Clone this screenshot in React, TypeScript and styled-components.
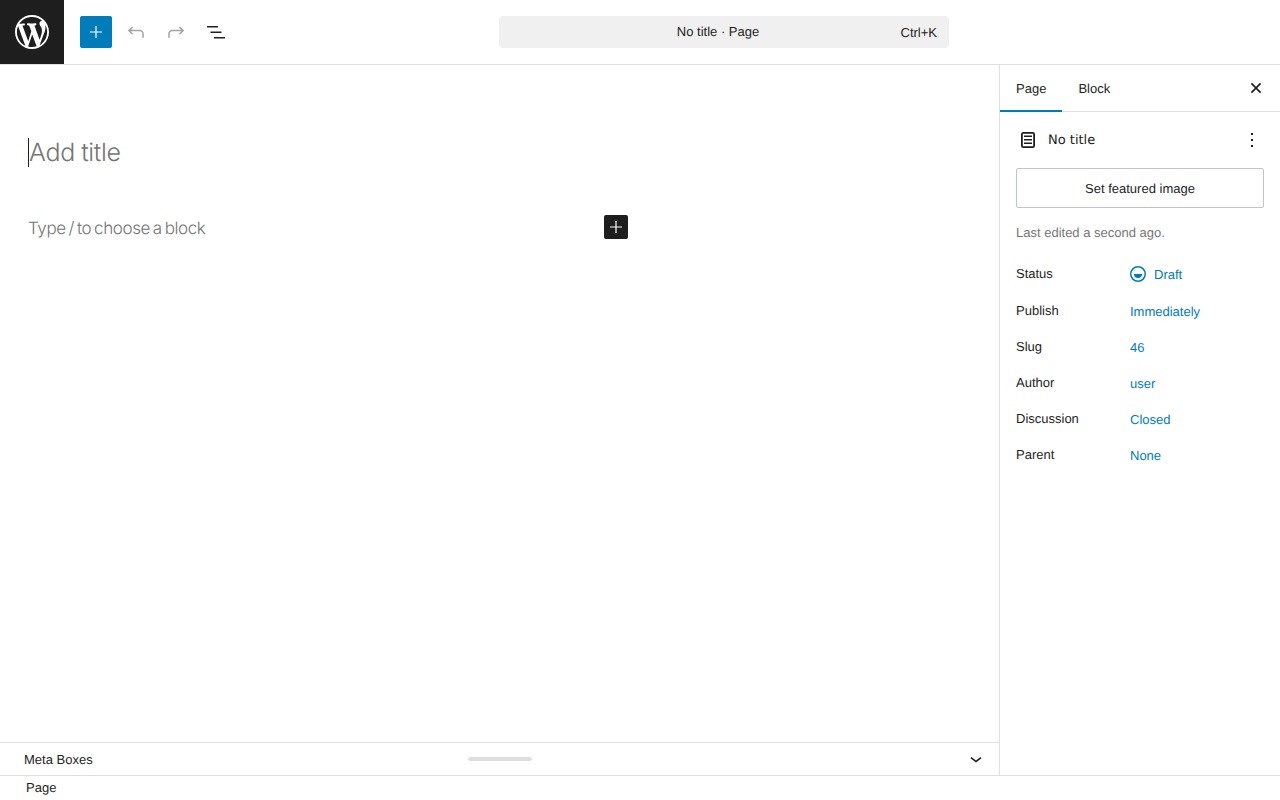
import React from "react";
import styled, { createGlobalStyle } from "styled-components";

const Global = createGlobalStyle`
  html, body { margin: 0; padding: 0; background: #fff; }
  body { font-family: "Liberation Sans", Arial, sans-serif; font-size: 13px; color: #1e1e1e; overflow: hidden; text-rendering: geometricPrecision; }
  * { box-sizing: border-box; }
`;

const Shell = styled.div`
  width: 1280px;
  height: 800px;
  display: flex;
  flex-direction: column;
`;
const Header = styled.header`
  height: 65px;
  flex: none;
  display: flex;
  align-items: flex-start;
  border-bottom: 1px solid #e0e0e0;
`;
const Logo = styled.div`
  width: 64px;
  height: 64px;
  background: #1e1e1e;
  display: flex;
  align-items: center;
  justify-content: center;
  color: #fff;
`;
const Tools = styled.div`
  width: 435px;
  height: 64px;
  padding: 16px 0 0 16px;
  display: flex;
  gap: 8px;
`;
const ToolButton = styled.div<{ $primary?: boolean; $muted?: boolean }>`
  width: 32px;
  height: 32px;
  border-radius: 2px;
  display: flex;
  align-items: center;
  justify-content: center;
  background: ${(p) => (p.$primary ? "#007cba" : "transparent")};
  color: ${(p) => (p.$primary ? "#fff" : p.$muted ? "#a2a2a2" : "#1e1e1e")};
`;
const Command = styled.div`
  margin-top: 16px;
  width: 450px;
  height: 32px;
  background: #f0f0f0;
  border-radius: 4px;
  display: flex;
  align-items: center;
  padding: 0 12px;
`;
const CommandTitle = styled.div`
  flex: 1;
  text-align: center;
  padding-left: 24.5px;
  margin-top: -1px;
`;
const CommandKey = styled.div`
  margin-top: 1px;
`;
const Body = styled.div`
  flex: 1;
  min-height: 0;
  display: flex;
`;
const EditorColumn = styled.main`
  width: 1000px;
  border-right: 1px solid #e0e0e0;
  display: flex;
  flex-direction: column;
`;
const Canvas = styled.div`
  flex: 1;
  padding: 73px 28px 0;
`;
const TitleLine = styled.div`
  display: flex;
  align-items: center;
  height: 29px;
`;
const Caret = styled.span`
  width: 1px;
  height: 29px;
  background: #1e1e1e;
`;
const TitlePlaceholder = styled.div`
  font-family: Inter, sans-serif;
  font-size: 25px;
  font-weight: 300;
  letter-spacing: -0.3px;
  word-spacing: -0.5px;
  color: #757575;
  line-height: 29px;
  margin-top: 1px;
`;
const BlockLine = styled.div`
  margin-top: 48px;
  width: 600px;
  height: 24px;
  display: flex;
  align-items: center;
  justify-content: space-between;
`;
const BlockPlaceholder = styled.div`
  font-family: Inter, sans-serif;
  font-size: 17px;
  font-weight: 300;
  letter-spacing: -0.4px;
  word-spacing: -1.5px;
  color: #757575;
  margin-top: 3px;
`;
const BlockAdd = styled.div`
  width: 24px;
  height: 24px;
  border-radius: 2px;
  background: #1e1e1e;
  color: #fff;
  display: flex;
  align-items: center;
  justify-content: center;
`;
const MetaBar = styled.div`
  height: 33px;
  flex: none;
  border-top: 1px solid #e0e0e0;
  padding: 0 11px 0 24px;
  display: flex;
  align-items: center;
  justify-content: space-between;
  position: relative;
`;
const Handle = styled.div`
  position: absolute;
  left: 468px;
  top: 14px;
  width: 64px;
  height: 4px;
  border-radius: 2px;
  background: #ddd;
`;
const ChevronBox = styled.div`
  display: flex;
  color: #1e1e1e;
`;
const Sidebar = styled.aside`
  width: 280px;
  display: flex;
  flex-direction: column;
`;
const Tabs = styled.div`
  height: 47px;
  flex: none;
  border-bottom: 1px solid #e0e0e0;
  display: flex;
  align-items: stretch;
  position: relative;
`;
const Tab = styled.div<{ $active?: boolean }>`
  padding: 0 16px;
  display: flex;
  align-items: center;
  margin-bottom: -1px;
  padding-bottom: 1px;
  box-shadow: ${(p) => (p.$active ? "inset 0 -2px 0 #007cba" : "none")};
`;
const CloseBox = styled.div`
  position: absolute;
  right: 11px;
  top: 10px;
  display: flex;
`;
const Panel = styled.div`
  padding: 16px;
`;
const DocHeader = styled.div`
  height: 24px;
  display: flex;
  align-items: center;
  margin-bottom: 16px;
`;
const DocIcon = styled.div`
  width: 24px;
  height: 24px;
  margin-right: 8px;
  display: flex;
`;
const DocTitle = styled.div`
  flex: 1;
  font-family: "DejaVu Sans", sans-serif;
  font-size: 13px;
  line-height: 26px;
  height: 24px;
`;
const MoreBox = styled.div`
  width: 24px;
  height: 24px;
  display: flex;
`;
const FeaturedButton = styled.div`
  height: 40px;
  border: 1px solid #c3c4c7;
  border-radius: 2px;
  display: flex;
  align-items: center;
  justify-content: center;
`;
const Edited = styled.div`
  margin-top: 17px;
  height: 15px;
  line-height: 15px;
  color: #757575;
`;
const Rows = styled.div`
  margin-top: 24px;
  display: flex;
  flex-direction: column;
`;
const Row = styled.div<{ $height: number }>`
  display: flex;
  height: ${(p) => p.$height}px;
  align-items: flex-start;
`;
const RowLabel = styled.div`
  width: 114px;
  line-height: 15px;
  padding-top: 2px;
`;
const RowValue = styled.div`
  display: flex;
  align-items: center;
  gap: 8px;
  color: #007cba;
  line-height: 15px;
  padding-top: 3px;
`;
const StatusDot = styled.svg`
  margin-top: -1px;
`;
const StatusBar = styled.footer`
  height: 25px;
  flex: none;
  border-top: 1px solid #e0e0e0;
  padding-left: 26px;
  line-height: 23px;
  color: #1e1e1e;
`;

const Plus = () => (
  <svg width="24" height="24" viewBox="0 0 24 24" fill="currentColor">
    <path d="M18 11.4h-5.4V6h-1.2v5.4H6v1.2h5.4V18h1.2v-5.4H18z" />
  </svg>
);

const rows = [
  { label: "Publish", value: "Immediately", h: 36 },
  { label: "Slug", value: "46", h: 36 },
  { label: "Author", value: "user", h: 36 },
  { label: "Discussion", value: "Closed", h: 36 },
  { label: "Parent", value: "None", h: 36 },
];

export default function App() {
  return (
    <Shell>
      <Global />
      <Header>
        <Logo>
          <svg width="34" height="34" viewBox="0 0 20 20" fill="currentColor">
            <path d="M20 10c0-5.51-4.49-10-10-10C4.48 0 0 4.49 0 10c0 5.52 4.48 10 10 10 5.51 0 10-4.48 10-10zM7.78 15.37L4.37 6.22c.55-.02 1.17-.08 1.17-.08.5-.06.44-1.13-.06-1.11 0 0-1.45.11-2.37.11-.18 0-.37 0-.58-.01C4.12 2.69 6.87 1.11 10 1.11c2.33 0 4.45.87 6.05 2.34-.68-.11-1.65.39-1.65 1.58 0 .74.45 1.36.9 2.1.35.61.55 1.36.55 2.46 0 1.49-1.4 5-1.4 5l-3.03-8.37c.54-.02.82-.17.82-.17.5-.05.44-1.25-.06-1.22 0 0-1.44.12-2.38.12-.87 0-2.33-.12-2.33-.12-.5-.03-.56 1.2-.06 1.22l.92.08 1.26 3.41zM17.41 10c.24-.64.74-1.87.43-4.25.7 1.29 1.05 2.71 1.05 4.25 0 3.29-1.73 6.24-4.4 7.78.97-2.59 1.94-5.2 2.92-7.78zM6.1 18.09C3.12 16.65 1.11 13.53 1.11 10c0-1.3.23-2.48.72-3.59C3.25 10.3 4.67 14.2 6.1 18.09zm4.03-6.63l2.58 6.98c-.86.29-1.76.45-2.71.45-.79 0-1.57-.11-2.29-.33.81-2.38 1.62-4.74 2.42-7.1z" />
          </svg>
        </Logo>
        <Tools>
          <ToolButton $primary><Plus /></ToolButton>
          <ToolButton $muted>
            <svg width="24" height="24" viewBox="0 0 24 24" fill="none" stroke="currentColor" strokeWidth="1.5">
              <path d="M8.6 7 4.9 10.6 8.6 14.2M5 10.6h10.5a3.5 3.5 0 0 1 3.5 3.5v3.7" />
            </svg>
          </ToolButton>
          <ToolButton $muted>
            <svg width="24" height="24" viewBox="0 0 24 24" fill="none" stroke="currentColor" strokeWidth="1.5">
              <path d="M15.4 7l3.7 3.6-3.7 3.6M19 10.6H8.5A3.5 3.5 0 0 0 5 14.1v3.7" />
            </svg>
          </ToolButton>
          <ToolButton>
            <svg width="24" height="24" viewBox="0 0 24 24" fill="currentColor">
              <path d="M3 6h11v1.5H3V6Zm3.5 5.5h11V13h-11v-1.5ZM21 17H10v1.5h11V17Z" />
            </svg>
          </ToolButton>
        </Tools>
        <Command>
          <CommandTitle>No title · Page</CommandTitle>
          <CommandKey>Ctrl+K</CommandKey>
        </Command>
      </Header>
      <Body>
        <EditorColumn>
          <Canvas>
            <TitleLine>
              <Caret />
              <TitlePlaceholder>Add title</TitlePlaceholder>
            </TitleLine>
            <BlockLine>
              <BlockPlaceholder>Type / to choose a block</BlockPlaceholder>
              <BlockAdd><Plus /></BlockAdd>
            </BlockLine>
          </Canvas>
          <MetaBar>
            <span>Meta Boxes</span>
            <Handle />
            <ChevronBox>
              <svg width="24" height="24" viewBox="0 0 24 24" fill="currentColor">
                <path d="M17.5 11.2L12 15.6l-5.5-4.4.9-1.2L12 13.6l4.5-3.6 1 1.2z" />
              </svg>
            </ChevronBox>
          </MetaBar>
        </EditorColumn>
        <Sidebar>
          <Tabs>
            <Tab $active>Page</Tab>
            <Tab>Block</Tab>
            <CloseBox>
              <svg width="26" height="26" viewBox="0 0 24 24" fill="currentColor">
                <path d="M12 13.06l3.712 3.713 1.061-1.06L13.061 12l3.712-3.712-1.06-1.06L12 10.938 8.288 7.227l-1.061 1.06L10.939 12l-3.712 3.712 1.06 1.061L12 13.061z" />
              </svg>
            </CloseBox>
          </Tabs>
          <Panel>
            <DocHeader>
              <DocIcon>
                <svg width="24" height="24" viewBox="0 0 24 24" fill="currentColor">
                  <path d="M8 7.5h8V9H8zM8 11h8v1.5H8zM8 14.5h8V16H8z" />
                  <rect x="5.9" y="4.9" width="12.2" height="14.2" rx="1.4" fill="none" stroke="currentColor" strokeWidth="1.8" />
                </svg>
              </DocIcon>
              <DocTitle>No title</DocTitle>
              <MoreBox>
                <svg width="24" height="24" viewBox="0 0 24 24" fill="currentColor">
                  <path d="M13 19h-2v-2h2v2zm0-6h-2v-2h2v2zm0-6h-2V5h2v2z" />
                </svg>
              </MoreBox>
            </DocHeader>
            <FeaturedButton>Set featured image</FeaturedButton>
            <Edited>Last edited a second ago.</Edited>
            <Rows>
              <Row $height={37}>
                <RowLabel>Status</RowLabel>
                <RowValue>
                  <StatusDot width="16" height="16" viewBox="0 0 16 16">
                    <circle cx="8" cy="8" r="7.25" fill="none" stroke="currentColor" strokeWidth="1.5" />
                    <path d="M4 8h8a4 4 0 0 1-8 0Z" fill="currentColor" />
                  </StatusDot>
                  Draft
                </RowValue>
              </Row>
              {rows.map((r) => (
                <Row key={r.label} $height={r.h}>
                  <RowLabel>{r.label}</RowLabel>
                  <RowValue>{r.value}</RowValue>
                </Row>
              ))}
            </Rows>
          </Panel>
        </Sidebar>
      </Body>
      <StatusBar>Page</StatusBar>
    </Shell>
  );
}
